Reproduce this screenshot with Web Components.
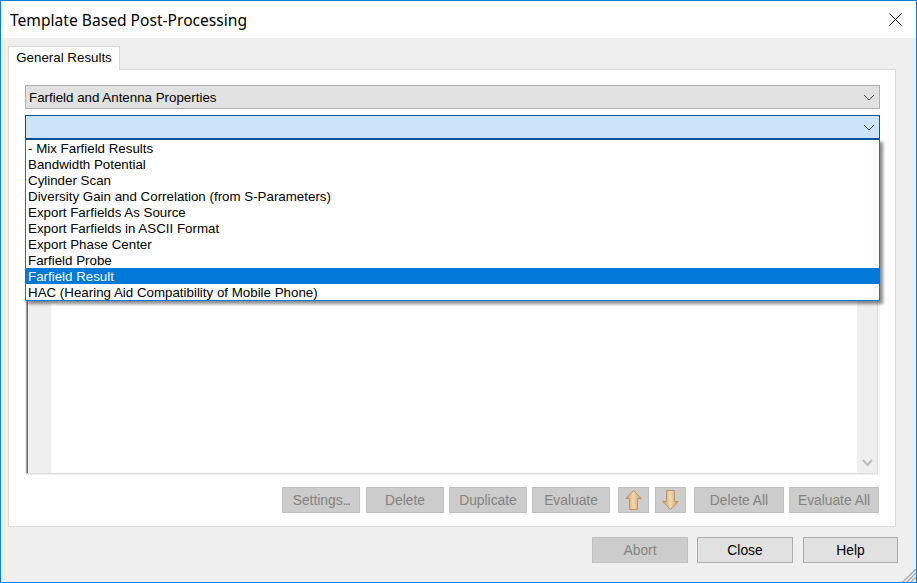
<!DOCTYPE html>
<html>
<head>
<meta charset="utf-8">
<title>Template Based Post-Processing</title>
<style>
  html, body { margin: 0; padding: 0; }
  body { width: 917px; height: 583px; overflow: hidden; font-family: "Liberation Sans", Arial, sans-serif; font-size: 13.33px; color: #000; }
</style>
</head>
<body>

<template id="dlg-button-template">
  <style>
    :host { display: block; box-sizing: border-box; height: 26px; width: var(--w, 78px); background: #e1e1e1; border: 1px solid #adadad; color: #000; font: 13.8px "Liberation Sans", Arial, sans-serif; }
    :host([disabled]) { background: #cccccc; border-color: #bfbfbf; color: #838383; }
    div { height: 100%; display: flex; align-items: center; justify-content: center; }
  </style>
  <div><span><slot></slot></span></div>
</template>

<template id="dlg-combo-template">
  <style>
    :host { display: block; box-sizing: border-box; height: 24px; background: #e1e1e1; border: 1px solid #adadad; font: 13.33px "Liberation Sans", Arial, sans-serif; }
    :host([open]) { background: #cce4f7; border-color: #005499; }
    div { height: 100%; display: flex; align-items: center; justify-content: space-between; padding: 0 4px 0 3px; }
    svg { display: block; }
  </style>
  <div><span><slot></slot></span><svg width="12" height="7" viewBox="0 0 12 7"><path d="M1 1l5 5 5-5" fill="none" stroke="#444" stroke-width="1"/></svg></div>
</template>

<template id="drop-list-template">
  <style>
    :host { display: block; position: absolute; left: 16px; right: 15px; top: 69px; box-sizing: border-box; height: 162px; background: #fff; border: 1px solid #0078d7; border-top-color: #005499; box-shadow: 3px 3px 3px rgba(0,0,0,.45); font: 13.33px "Liberation Sans", Arial, sans-serif; }
    ::slotted(drop-item) { display: block; }
  </style>
  <slot></slot>
</template>

<template id="drop-item-template">
  <style>
    :host { display: block; height: 16px; line-height: 16px; padding-left: 2px; white-space: nowrap; }
    :host([selected]) { background: #0078d7; color: #fff; }
    span { position: relative; top: 1px; }
  </style>
  <span><slot></slot></span>
</template>

<template id="results-list-template">
  <style>
    :host { display: block; flex: 1; box-sizing: border-box; margin-top: 6px; background: #fff; border: 1px solid #efefef; border-top: 0; }
    .frame { box-sizing: border-box; height: 100%; display: flex; border-left: 1px solid #a0a0a0; border-right: 1px solid #d9d9d9; border-bottom: 1px solid #dcdcdc; margin-right: 1px; margin-bottom: 1px; }
    .gutter { width: 23px; background: #efefef; border-left: 1px solid #696969; }
    .rows { flex: 1; background: #fff; }
    .scroll { width: 20px; background: #efefef; display: flex; align-items: flex-end; justify-content: center; padding-bottom: 6px; box-sizing: border-box; }
    svg { display: block; }
  </style>
  <div class="frame">
    <div class="gutter"></div>
    <div class="rows"></div>
    <div class="scroll"><svg width="11" height="8" viewBox="0 0 11 8"><path d="M1 1l4.5 5L10 1" fill="none" stroke="#bdbdbd" stroke-width="2"/></svg></div>
  </div>
</template>

<template id="arrow-button-template">
  <style>
    :host { display: block; box-sizing: border-box; width: 31px; height: 26px; background: #cccccc; border: 1px solid #bfbfbf; }
    div { height: 100%; display: flex; align-items: center; justify-content: center; }
    svg { display: block; }
  </style>
  <div></div>
</template>

<template id="dlg-window-template">
  <style>
    :host { position: relative; display: flex; flex-direction: column; box-sizing: border-box; width: 917px; height: 583px; border: 1px solid #0a7fdc; background: #efefef; font: 13.33px "Liberation Sans", Arial, sans-serif; }
    .title { height: 37px; flex: none; background: #fff; display: flex; align-items: center; justify-content: space-between; padding: 0 14px 0 9px; box-sizing: border-box; font: 15.6px "Noto Sans", sans-serif; color: #000; }
    .title svg { display: block; }
    .body { flex: 1; display: flex; flex-direction: column; padding: 8px 20px 0 7px; min-height: 0; }
    .footer { display: flex; justify-content: flex-end; margin-top: 10px; margin-right: -2px; height: 26px; margin-bottom: 19px; }
    .grip { position: absolute; right: 0; bottom: 0; display: block; }
  </style>
  <div class="title">
    <span><slot name="title"></slot></span>
    <svg width="13" height="13" viewBox="0 0 13 13"><path d="M.5.5l12 12M12.5.5l-12 12" stroke="#000" stroke-width="1" fill="none"/></svg>
  </div>
  <div class="body">
    <slot name="tabs"></slot>
    <div class="footer"><slot name="footer"></slot></div>
  </div>
  <svg class="grip" width="14" height="14" viewBox="0 0 14 14"><path d="M14 1L1 14M14 5L5 14M14 9L9 14" stroke="#a9a9a9" stroke-width="1.4" fill="none"/></svg>
</template>

<template id="tab-panel-template">
  <style>
    :host { display: block; font: 13.33px "Liberation Sans", Arial, sans-serif; }
    .tab { box-sizing: border-box; width: 112px; height: 24px; background: #fff; border: 1px solid #d9d9d9; border-bottom: 0; display: flex; align-items: center; justify-content: center; position: relative; z-index: 1; margin-bottom: -1px; padding-bottom: 2px; }
    .panel { position: relative; box-sizing: border-box; height: 458px; background: #fff; border: 1px solid #d9d9d9; padding: 15px 15px 13px 16px; display: flex; flex-direction: column; }
  </style>
  <div class="tab"><slot name="label"></slot></div>
  <div class="panel"><slot></slot></div>
</template>

<template id="button-row-template">
  <style>
    :host { display: flex; justify-content: flex-end; margin-top: 12px; margin-right: 1px; height: 26px; flex: none; }
  </style>
  <slot></slot>
</template>

<dlg-window>
  <span slot="title">Template Based Post-Processing</span>

  <tab-panel slot="tabs">
    <span slot="label">General Results</span>

    <dlg-combo>Farfield and Antenna Properties</dlg-combo>
    <dlg-combo open style="margin-top:6px"></dlg-combo>

    <results-list></results-list>

    <button-row>
      <dlg-button disabled>Settings<span style="letter-spacing:-1.6px">...</span></dlg-button>
      <dlg-button disabled style="margin-left:6px">Delete</dlg-button>
      <dlg-button disabled style="margin-left:5px">Duplicate</dlg-button>
      <dlg-button disabled style="margin-left:5px">Evaluate</dlg-button>
      <arrow-button dir="up" style="margin-left:8px"></arrow-button>
      <arrow-button dir="down" style="margin-left:6px"></arrow-button>
      <dlg-button disabled style="margin-left:8px;--w:90px">Delete All</dlg-button>
      <dlg-button disabled style="margin-left:5px;--w:90px">Evaluate All</dlg-button>
    </button-row>

    <drop-list>
      <drop-item>- Mix Farfield Results</drop-item>
      <drop-item>Bandwidth Potential</drop-item>
      <drop-item>Cylinder Scan</drop-item>
      <drop-item>Diversity Gain and Correlation (from S-Parameters)</drop-item>
      <drop-item>Export Farfields As Source</drop-item>
      <drop-item>Export Farfields in ASCII Format</drop-item>
      <drop-item>Export Phase Center</drop-item>
      <drop-item>Farfield Probe</drop-item>
      <drop-item selected>Farfield Result</drop-item>
      <drop-item>HAC (Hearing Aid Compatibility of Mobile Phone)</drop-item>
    </drop-list>
  </tab-panel>

  <dlg-button slot="footer" disabled style="--w:96px">Abort</dlg-button>
  <dlg-button slot="footer" style="--w:96px;margin-left:9px">Close</dlg-button>
  <dlg-button slot="footer" style="--w:95px;margin-left:10px">Help</dlg-button>
</dlg-window>

<script>
  // plain elements: clone the template into an open shadow root
  function simple(tag, tplId) {
    customElements.define(tag, class extends HTMLElement {
      constructor() {
        super();
        const content = document.getElementById(tplId).content.cloneNode(true);
        this.attachShadow({ mode: 'open' }).appendChild(content);
      }
    });
  }

  simple('dlg-window', 'dlg-window-template');
  simple('tab-panel', 'tab-panel-template');
  simple('dlg-combo', 'dlg-combo-template');
  simple('dlg-button', 'dlg-button-template');
  simple('drop-list', 'drop-list-template');
  simple('drop-item', 'drop-item-template');
  simple('results-list', 'results-list-template');
  simple('button-row', 'button-row-template');

  class ArrowButton extends HTMLElement {
    constructor() {
      super();
      const content = document.getElementById('arrow-button-template').content.cloneNode(true);
      this.attachShadow({ mode: 'open' }).appendChild(content);
    }
    connectedCallback() {
      const down = this.getAttribute('dir') === 'down';
      const id = down ? 'gd' : 'gu';
      this.shadowRoot.querySelector('div').innerHTML =
        `<svg width="17" height="20" viewBox="0 0 17 20">
          <defs><linearGradient id="${id}" x1="0" x2="1" y1="0" y2="0">
            <stop offset="0" stop-color="#cf9a5c"/><stop offset=".5" stop-color="#eed9b4"/><stop offset="1" stop-color="#cf9a5c"/>
          </linearGradient></defs>
          <path transform="${down ? 'rotate(180 8.5 10)' : ''}" d="M8.5 .7L16.2 8.5H12.5V19.5H4.5V8.5H.8Z" fill="url(#${id})" stroke="#c98f5c" stroke-width="1"/>
        </svg>`;
    }
  }
  customElements.define('arrow-button', ArrowButton);
</script>
</body>
</html>
